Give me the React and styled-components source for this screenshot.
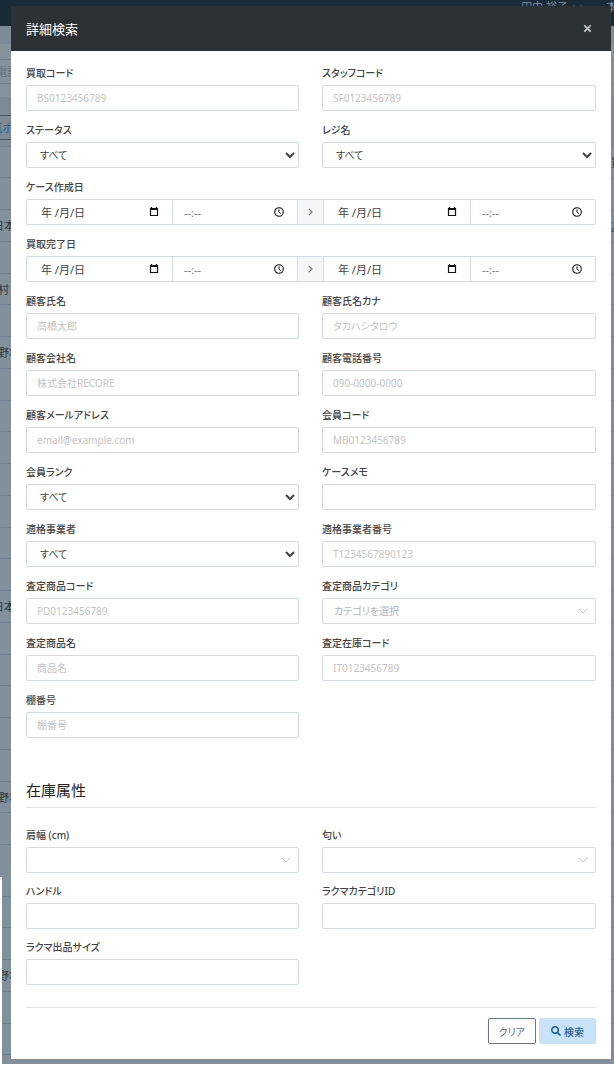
import React from 'react';
import styled, { createGlobalStyle } from 'styled-components';
import { FaSearch } from 'react-icons/fa';

const TABLE_ROWS = Array.from({ length: 22 }, (_, i) => ({ id: i }));
TABLE_ROWS[0].right = '買';
TABLE_ROWS[2] = { id: 2, left: '日本', end: true, right: '2', link: true };
TABLE_ROWS[4].left = '村 真';
TABLE_ROWS[6].left = '野場';
TABLE_ROWS[14] = { id: 14, left: '日本', end: true };
TABLE_ROWS[20].left = '野場';

const SUB_ROWS = Array.from({ length: 6 }, (_, i) => ({ id: i }));
SUB_ROWS[3].left = '野場';

const FIELDS_TOP = [
  { id: 'caseCode', label: '買取コード', placeholder: 'BS0123456789' },
  { id: 'staffCode', label: 'スタッフコード', placeholder: 'SF0123456789' },
  { id: 'status', label: 'ステータス', type: 'select' },
  { id: 'register', label: 'レジ名', type: 'select' },
  { id: 'created', label: 'ケース作成日', type: 'range' },
  { id: 'completed', label: '買取完了日', type: 'range' },
  { id: 'name', label: '顧客氏名', placeholder: '高橋太郎' },
  { id: 'kana', label: '顧客氏名カナ', placeholder: 'タカハシタロウ' },
  { id: 'company', label: '顧客会社名', placeholder: '株式会社RECORE' },
  { id: 'tel', label: '顧客電話番号', placeholder: '090-0000-0000' },
  { id: 'mail', label: '顧客メールアドレス', placeholder: 'email@example.com' },
  { id: 'memberCode', label: '会員コード', placeholder: 'MB0123456789' },
  { id: 'rank', label: '会員ランク', type: 'select' },
  { id: 'memo', label: 'ケースメモ' },
  { id: 'invoice', label: '適格事業者', type: 'select' },
  { id: 'invoiceNo', label: '適格事業者番号', placeholder: 'T1234567890123' },
  { id: 'productCode', label: '査定商品コード', placeholder: 'PD0123456789' },
  { id: 'category', label: '査定商品カテゴリ', type: 'picker', placeholder: 'カテゴリを選択' },
  { id: 'productName', label: '査定商品名', placeholder: '商品名' },
  { id: 'stockCode', label: '査定在庫コード', placeholder: 'IT0123456789' },
  { id: 'shelf', label: '棚番号', placeholder: '棚番号' },
];

const FIELDS_ATTR = [
  { id: 'shoulder', label: '肩幅 (cm)', type: 'picker' },
  { id: 'smell', label: '匂い', type: 'picker' },
  { id: 'handle', label: 'ハンドル' },
  { id: 'rakumaCategory', label: 'ラクマカテゴリID' },
  { id: 'rakumaSize', label: 'ラクマ出品サイズ' },
];

function CalendarIcon() {
  return (
    <svg width='10' height='10' viewBox='0 0 10 10' aria-hidden='true'>
      <path
        d='M1.5 1.5h7v7h-7z M1 2.5h8 M2.5 0v2 M7.5 0v2'
        fill='none'
        stroke='#111'
        strokeWidth='1.2'
      />
    </svg>
  );
}

function ClockIcon() {
  return (
    <svg width='10' height='10' viewBox='0 0 10 10' aria-hidden='true'>
      <circle cx='5' cy='5' r='4.3' fill='none' stroke='#111' strokeWidth='1.1' />
      <path d='M5 2.4V5.2L6.8 6.6' fill='none' stroke='#111' strokeWidth='1' />
    </svg>
  );
}

function DateTime({ label }) {
  return (
    <>
      <Cell>
        <CellInput $date aria-label={`${label} 日付`} placeholder='年 /月/日' />
        <PickButton type='button' aria-label='カレンダー'>
          <CalendarIcon />
        </PickButton>
      </Cell>
      <Cell>
        <CellInput aria-label={`${label} 時刻`} placeholder='--:--' />
        <PickButton type='button' aria-label='時刻'>
          <ClockIcon />
        </PickButton>
      </Cell>
    </>
  );
}

function Field({ id, label, type, placeholder }) {
  if (type === 'range') {
    return (
      <RangeField>
        <Legend>{label}</Legend>
        <RangeRow>
          <DateTime label={`${label} 開始`} />
          <Arrow>
            <svg width='5' height='8' viewBox='0 0 5 8' aria-hidden='true'>
              <path d='M.8 .8L4 4L.8 7.2' fill='none' stroke='#77706c' strokeWidth='1.2' />
            </svg>
          </Arrow>
          <DateTime label={`${label} 終了`} />
        </RangeRow>
      </RangeField>
    );
  }

  return (
    <FieldBox>
      <Label htmlFor={id}>{label}</Label>
      {type === 'select' && (
        <Select id={id}>
          <option>すべて</option>
        </Select>
      )}
      {type === 'picker' && (
        <PickerWrap>
          <Picker id={id}>
            <option>{placeholder || ''}</option>
          </Picker>
          <svg width='10' height='6' viewBox='0 0 10 6' aria-hidden='true'>
            <path d='M1 1L5 5L9 1' fill='none' stroke='#c0c4cc' strokeWidth='1' />
          </svg>
        </PickerWrap>
      )}
      {!type && <Input id={id} type='text' placeholder={placeholder} />}
    </FieldBox>
  );
}

function Rows({ rows }) {
  return rows.map((row) => (
    <BackRow key={row.id}>
      <BackCell $end={row.end}>{row.left}</BackCell>
      <BackEdge $link={row.link}>{row.right}</BackEdge>
    </BackRow>
  ));
}

function App() {
  return (
    <>
      <GlobalStyle />
      <Screen>
        <Backdrop aria-hidden='true'>
          <TopBar>
            <span>田中 裕子</span>
            <svg width='9' height='5' viewBox='0 0 9 5'>
              <path d='M1 .5L4.5 4L8 .5' fill='none' stroke='#84919b' />
            </svg>
            <span>本店</span>
          </TopBar>
          <SubBar />
          <SearchBar>
            <SearchBox>電話</SearchBox>
          </SearchBar>
          <TabBar>
            <Tab>気ポ</Tab>
          </TabBar>
          <Rows rows={TABLE_ROWS} />
          <BackGap />
          <Rows rows={SUB_ROWS} />
        </Backdrop>
        <SideSheet />
        <Dialog role='dialog' aria-labelledby='dialogTitle'>
          <Header>
            <Title id='dialogTitle'>詳細検索</Title>
            <CloseButton type='button' aria-label='閉じる'>
              <svg width='9' height='9' viewBox='0 0 9 9' aria-hidden='true'>
                <path d='M1.3 1.3L7.7 7.7M7.7 1.3L1.3 7.7' stroke='#c4c6c8' strokeWidth='1.8' />
              </svg>
            </CloseButton>
          </Header>
          <Body>
            <FieldGrid>
              {FIELDS_TOP.map((field) => (
                <Field key={field.id} {...field} />
              ))}
            </FieldGrid>
            <SectionTitle>在庫属性</SectionTitle>
            <FieldGrid $tight>
              {FIELDS_ATTR.map((field) => (
                <Field key={field.id} {...field} />
              ))}
            </FieldGrid>
            <Footer>
              <Button type='button'>クリア</Button>
              <Button type='submit' $primary>
                <FaSearch size={10} />
                検索
              </Button>
            </Footer>
          </Body>
        </Dialog>
      </Screen>
    </>
  );
}

const GlobalStyle = createGlobalStyle`
  * {
    box-sizing: border-box;
  }

  body {
    margin: 0;
    background: #fff;
  }

  body,
  input,
  select,
  button {
    font-family: 'Noto Sans', 'Noto Sans CJK JP', sans-serif;
    font-feature-settings: 'palt';
    font-size: 11px;
    color: #444;
  }
`;

const Screen = styled.div`
  position: relative;
  padding: 6px 3px 5px 11px;
`;

const Backdrop = styled.div`
  position: absolute;
  inset: 0;
  overflow: hidden;
  background: #82909b;
`;

const TopBar = styled.div`
  display: flex;
  justify-content: flex-end;
  height: 26px;
  background: #192b38;
  color: #84919b;
  line-height: 13px;
  white-space: nowrap;

  svg {
    margin: 5px 24px 0 5px;
  }

  span:last-child {
    width: 8px;
  }
`;

const SubBar = styled.div`
  height: 18px;
  background: #7d8a97;
`;

const SearchBar = styled.div`
  height: 53px;
  padding-top: 15px;
  background: #85929b;
`;

const SearchBox = styled.div`
  height: 25px;
  border: solid #6f7c88;
  border-width: 1px 0;
  line-height: 24px;
  text-indent: -4px;
  color: #68747e;
`;

const TabBar = styled.div`
  height: 50px;
  padding-top: 18px;
  background: #7d8a96;
  border-bottom: 1px solid #74818e;
`;

const Tab = styled.div`
  display: flex;
  justify-content: flex-end;
  width: 13px;
  height: 25px;
  border: solid #1d5f96;
  border-width: 1px 0;
  line-height: 23px;
  white-space: nowrap;
  color: #1d5f96;
`;

const BackRow = styled.div`
  display: flex;
  justify-content: space-between;
  height: 32px;
  border-bottom: 1px solid #6f7e90;
  line-height: 31px;
  white-space: nowrap;
  color: #2c3741;

  &:nth-child(4n + 5) {
    height: 31px;
  }
`;

const BackCell = styled.span`
  display: flex;
  justify-content: ${({ $end }) => ($end ? 'flex-end' : 'flex-start')};
  width: 15px;
  text-indent: ${({ $end }) => ($end ? '0' : '-2px')};
`;

const BackEdge = styled.span`
  width: 3px;
  color: ${({ $link }) => ($link ? '#1d5f96' : 'inherit')};
  text-decoration: ${({ $link }) => ($link ? 'underline' : 'none')};
`;

const BackGap = styled.div`
  height: 20px;
`;

const SideSheet = styled.div`
  position: absolute;
  left: 0;
  bottom: 0;
  width: 2px;
  height: 187px;
  background: #fff;
`;

const Dialog = styled.div`
  position: relative;
  background: #fff;
`;

const Header = styled.div`
  display: flex;
  justify-content: space-between;
  align-items: center;
  height: 45px;
  padding: 0 15px;
  background: #2c3135;
`;

const Title = styled.h1`
  margin: 0;
  font-size: 13px;
  font-weight: 400;
  color: #fff;
`;

const CloseButton = styled.button`
  display: flex;
  padding: 4px;
  border: 0;
  background: none;
`;

const Body = styled.form`
  padding: 14px 15px 15px;
`;

const FieldGrid = styled.div`
  display: grid;
  grid-template-columns: 273fr 274fr;
  column-gap: 23px;
  row-gap: ${({ $tight }) => ($tight ? '10px' : '11px')};
`;

const FieldBox = styled.div`
  display: flex;
  flex-direction: column;
  gap: 4px;
  min-width: 0;
`;

const Label = styled.label`
  height: 16px;
  font-size: 10px;
  font-weight: 500;
  line-height: 16px;
`;

const RangeField = styled.fieldset`
  grid-column: 1 / -1;
  min-width: 0;
  margin: 0;
  padding: 0;
  border: 0;
`;

const Legend = styled.legend`
  height: 16px;
  margin-bottom: 4px;
  padding: 0;
  font-size: 10px;
  font-weight: 500;
  line-height: 16px;
`;

const Input = styled.input`
  width: 100%;
  height: 26px;
  padding: 0 10px;
  border: 1px solid #d3d9e5;
  border-radius: 2px;
  background: #fff;
  font-size: 10px;

  &::placeholder {
    color: #c4c4c4;
  }
`;

const Select = styled.select`
  width: 100%;
  height: 26px;
  padding: 0 0 0 9px;
  border: 1px solid #d3d9e5;
  border-radius: 2px;
  background: #fff;
  font-size: 10px;
`;

const PickerWrap = styled.div`
  position: relative;

  svg {
    position: absolute;
    top: 10px;
    right: 8px;
    pointer-events: none;
  }
`;

const Picker = styled.select`
  appearance: none;
  display: block;
  width: 100%;
  height: 26px;
  padding: 0 11px;
  border: 1px solid #d3d9e5;
  border-radius: 2px;
  background: #fff;
  font-size: 10px;
  color: #b0b4bc;
`;

const RangeRow = styled.div`
  display: grid;
  grid-template-columns: 145fr 125fr 26px 147fr 125fr;
  height: 26px;
  border: 1px solid #d3d9e5;
  border-radius: 2px;

  > * + * {
    border-left: 1px solid #d3d9e5;
  }
`;

const Cell = styled.div`
  display: flex;
  align-items: center;
  min-width: 0;
  padding-right: 13px;
`;

const CellInput = styled.input`
  flex: 1;
  min-width: 0;
  padding: 0 0 0 ${({ $date }) => ($date ? '14px' : '11px')};
  border: 0;
  background: none;

  &::placeholder {
    color: ${({ $date }) => ($date ? '#444' : '#777')};
  }
`;

const PickButton = styled.button`
  display: flex;
  padding: 0;
  border: 0;
  background: none;
`;

const Arrow = styled.span`
  display: flex;
  justify-content: center;
  align-items: center;
  background: #f5f6f8;
`;

const SectionTitle = styled.h2`
  margin: 41px 0 19px;
  padding-bottom: 6px;
  border-bottom: 1px solid #e2e4ea;
  font-size: 15px;
  font-weight: 400;
  line-height: 22px;
  color: #222;
`;

const Footer = styled.div`
  display: flex;
  justify-content: flex-end;
  gap: 3px;
  margin-top: 22px;
  padding-top: 10px;
  border-top: 1px solid #e2e4ea;
`;

const Button = styled.button`
  display: flex;
  justify-content: center;
  align-items: center;
  gap: 3px;
  height: 26px;
  padding: 0 ${({ $primary }) => ($primary ? '11px' : '10px')};
  border: 1px solid ${({ $primary }) => ($primary ? '#c8e2f8' : '#64779a')};
  border-radius: 2px;
  background: ${({ $primary }) => ($primary ? '#c8e2f8' : '#fff')};
  font-size: 10px;
  font-weight: ${({ $primary }) => ($primary ? 500 : 400)};
  color: ${({ $primary }) => ($primary ? '#1b5f97' : '#5b6e90')};
`;

export default App;
